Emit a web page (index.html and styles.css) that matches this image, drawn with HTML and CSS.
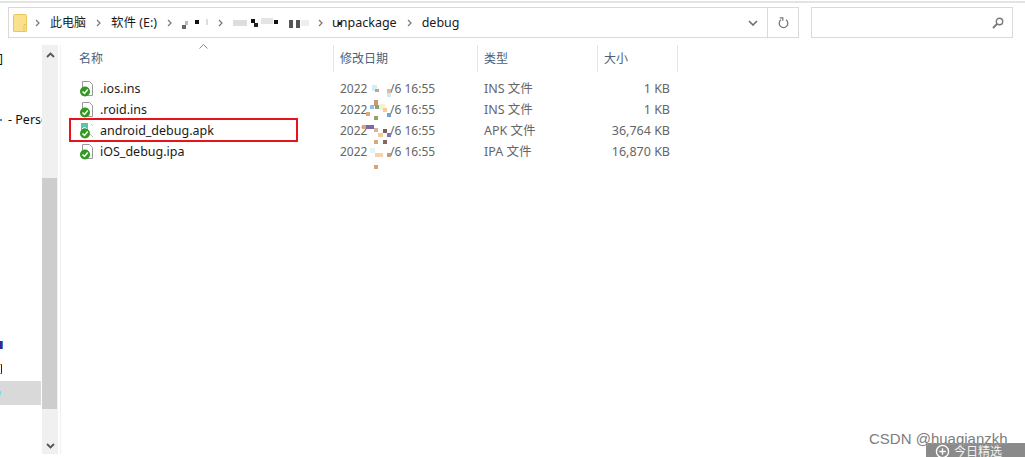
FILE: index.html
```html
<!DOCTYPE html>
<html lang="zh">
<head>
<meta charset="utf-8">
<title>debug</title>
<link rel="stylesheet" href="styles.css">
</head>
<body>
<div class="topline"></div>
<div class="toolbar">
  <div class="address">
    <svg class="folder" width="14" height="18" viewBox="0 0 14 18"><path d="M.5 1.500a1 1 0 0 1 1-1h11a1 1 0 0 1 1 1v15.500a.5.500 0 0 1-.5.500H1a.5.500 0 0 1-.5-.5z" fill="#fbe08e" stroke="#eac75c"/><path d="M11 17V10.500h2.500" fill="none" stroke="#eac75c"/></svg>
    <div class="crumbs">
      <svg class="sep" width="5" height="8" viewBox="0 0 5 8"><path d="M1 1l3 3-3 3" fill="none" stroke="#777" stroke-width="1.200"/></svg>
      <span class="crumb">此电脑</span>
      <svg class="sep" width="5" height="8" viewBox="0 0 5 8"><path d="M1 1l3 3-3 3" fill="none" stroke="#777" stroke-width="1.200"/></svg>
      <span class="crumb crumb-latin">软件 (E:)</span>
      <svg class="sep" width="5" height="8" viewBox="0 0 5 8"><path d="M1 1l3 3-3 3" fill="none" stroke="#777" stroke-width="1.200"/></svg>
      <svg class="mask-a" width="26" height="12" viewBox="0 0 26 12"><rect x="0" y="8" width="4" height="4" fill="#666"/><rect x="3" y="4" width="3" height="4" fill="#bbb"/><rect x="13" y="3" width="4" height="4" fill="#111"/><rect x="24" y="2" width="2" height="6" fill="#ddd"/></svg>
      <svg class="sep" width="5" height="8" viewBox="0 0 5 8"><path d="M1 1l3 3-3 3" fill="none" stroke="#777" stroke-width="1.200"/></svg>
      <svg class="mask-b" width="78" height="12" viewBox="0 0 78 12"><rect x="0" y="3" width="14" height="6" fill="#ddd"/><rect x="18" y="2" width="4" height="4" fill="#111"/><rect x="21" y="6" width="4" height="4" fill="#222"/><rect x="28" y="1" width="12" height="6" fill="#e4e4e4"/><rect x="41" y="3" width="4" height="4" fill="#111"/><rect x="56" y="3" width="4" height="8" fill="#555"/><rect x="63" y="3" width="4" height="8" fill="#555"/><rect x="68" y="3" width="8" height="6" fill="#eee"/></svg>
      <svg class="sep" width="5" height="8" viewBox="0 0 5 8"><path d="M1 1l3 3-3 3" fill="none" stroke="#777" stroke-width="1.200"/></svg>
      <span class="crumb crumb-latin crumb-masked">unpackage</span>
      <svg class="sep" width="5" height="8" viewBox="0 0 5 8"><path d="M1 1l3 3-3 3" fill="none" stroke="#777" stroke-width="1.200"/></svg>
      <span class="crumb crumb-latin">debug</span>
    </div>
    <svg class="chevron" width="10" height="6" viewBox="0 0 10 6"><path d="M1 1l4 4 4-4" fill="none" stroke="#6d6d6d" stroke-width="1.600"/></svg>
    <div class="refresh">
      <svg width="11" height="12" viewBox="0 0 11 12"><path d="M3 2.800a4.300 4.300 0 1 0 5 0" fill="none" stroke="#777" stroke-width="1.300"/><path d="M1.800 .8h3v3" fill="none" stroke="#777" stroke-width="1.200"/></svg>
    </div>
  </div>
  <div class="search">
    <svg width="12" height="12" viewBox="0 0 12 12"><circle cx="7.500" cy="4.500" r="3.200" fill="none" stroke="#777" stroke-width="1.400"/><path d="M5 7l-4 4" stroke="#777" stroke-width="1.800"/></svg>
  </div>
</div>
<div class="main">
  <aside class="nav">
    <div class="nav-list">
      <div class="nav-item nav-bracket">]</div>
      <div class="nav-item nav-persona"><i class="dot"></i>- Perso</div>
      <div class="nav-item nav-m"><i class="frag frag-m"></i></div>
      <div class="nav-item nav-o"><i class="frag frag-o"></i></div>
      <div class="nav-item nav-selected"><i class="frag frag-s"></i></div>
    </div>
    <div class="scrollbar">
      <svg class="arrow arrow-up" width="9" height="6" viewBox="0 0 9 6"><path d="M1 5l3.500-3.500L8 5" fill="none" stroke="#555" stroke-width="1.800"/></svg>
      <div class="thumb"></div>
      <svg class="arrow arrow-down" width="9" height="6" viewBox="0 0 9 6"><path d="M1 1l3.500 3.500L8 1" fill="none" stroke="#555" stroke-width="1.800"/></svg>
    </div>
  </aside>
  <section class="files">
    <svg class="sort" width="9" height="5" viewBox="0 0 9 5"><path d="M.5 4.500l4-4 4 4" fill="none" stroke="#8a8a8a"/></svg>
    <div class="head">
      <div class="col-name head-cell">名称</div>
      <div class="col-date head-cell">修改日期</div>
      <div class="col-type head-cell">类型</div>
      <div class="col-size head-cell">大小</div>
    </div>
    <div class="rows">
      <div class="row">
        <div class="col-name name-cell"><svg class="ficon" width="14" height="16" viewBox="0 0 14 16"><path d="M2.500.5h7l3 3v11h-10z" fill="#fff" stroke="#9a9a9a"/><circle cx="5" cy="10.500" r="5" fill="#2f9a1e"/><path d="M2.500 10.500l2 2 3.200-4" fill="none" stroke="#fff" stroke-width="1.500"/></svg><span>.ios.ins</span></div>
        <div class="col-date date-cell"><span class="yr">2022</span><span>/6 16:55</span></div>
        <div class="col-type">INS 文件</div>
        <div class="col-size">1 KB</div>
      </div>
      <div class="row">
        <div class="col-name name-cell"><svg class="ficon" width="14" height="16" viewBox="0 0 14 16"><path d="M2.500.5h7l3 3v11h-10z" fill="#fff" stroke="#9a9a9a"/><circle cx="5" cy="10.500" r="5" fill="#2f9a1e"/><path d="M2.500 10.500l2 2 3.200-4" fill="none" stroke="#fff" stroke-width="1.500"/></svg><span>.roid.ins</span></div>
        <div class="col-date date-cell"><span class="yr">2022</span><span>/6 16:55</span></div>
        <div class="col-type">INS 文件</div>
        <div class="col-size">1 KB</div>
      </div>
      <div class="row">
        <div class="col-name name-cell"><svg class="ficon" width="14" height="16" viewBox="0 0 14 16"><rect x="1" y="0" width="7" height="7" fill="#57c7a9"/><path d="M2 6a3 3 0 0 1 5 0" fill="none" stroke="#fff"/><path d="M11 1l2 2" stroke="#ccc"/><path d="M10 11l3 3" stroke="#bbb"/><circle cx="5" cy="10.500" r="5" fill="#2f9a1e"/><path d="M2.500 10.500l2 2 3.200-4" fill="none" stroke="#fff" stroke-width="1.500"/></svg><span>android_debug.apk</span></div>
        <div class="col-date date-cell"><span class="yr">2022</span><span>/6 16:55</span></div>
        <div class="col-type">APK 文件</div>
        <div class="col-size">36,764 KB</div>
      </div>
      <div class="row">
        <div class="col-name name-cell"><svg class="ficon" width="14" height="16" viewBox="0 0 14 16"><path d="M2.500.5h7l3 3v11h-10z" fill="#fff" stroke="#9a9a9a"/><circle cx="5" cy="10.500" r="5" fill="#2f9a1e"/><path d="M2.500 10.500l2 2 3.200-4" fill="none" stroke="#fff" stroke-width="1.500"/></svg><span>iOS_debug.ipa</span></div>
        <div class="col-date date-cell"><span class="yr">2022</span><span>/6 16:55</span></div>
        <div class="col-type">IPA 文件</div>
        <div class="col-size">16,870 KB</div>
      </div>
    </div>
    <svg class="mosaic" width="30" height="90" viewBox="0 0 30 90">
      <rect x="10" y="5" width="5" height="6" fill="#cdeefa"/><rect x="13" y="9" width="4" height="3" fill="#d2a277"/><rect x="25" y="9" width="4" height="4" fill="#e5bb96"/><rect x="25" y="13" width="4" height="4" fill="#c9ecf8"/>
      <rect x="12" y="20" width="4" height="6" fill="#c89a6d"/><rect x="8" y="25" width="4" height="4" fill="#8fc0e8"/><rect x="13" y="25" width="4" height="4" fill="#8aa07a"/><rect x="17" y="24" width="6" height="6" fill="#f5f2cc"/><rect x="4" y="32" width="4" height="4" fill="#dba878"/><rect x="12" y="36" width="4" height="4" fill="#9aa06c"/><rect x="21" y="28" width="4" height="4" fill="#f4cc9c"/><rect x="25" y="33" width="4" height="4" fill="#6ea5d8"/>
      <rect x="0" y="45" width="4" height="4" fill="#d5a67c"/><rect x="4" y="45" width="8" height="4" fill="#7f66a6"/><rect x="12" y="48" width="4" height="4" fill="#d5b49a"/><rect x="16" y="53" width="5" height="4" fill="#f4cc9c"/><rect x="21" y="49" width="4" height="4" fill="#7c5e5a"/><rect x="25" y="53" width="4" height="4" fill="#8276b6"/><rect x="12" y="60" width="4" height="4" fill="#d8a77c"/><rect x="21" y="60" width="4" height="4" fill="#8a6660"/>
      <rect x="8" y="68" width="5" height="5" fill="#e3f3f6"/><rect x="13" y="73" width="8" height="4" fill="#f5d2ae"/><rect x="25" y="73" width="4" height="4" fill="#c99b76"/><rect x="12" y="85" width="4" height="4" fill="#d5a57a"/>
    </svg>
    <div class="highlight"></div>
  </section>
</div>
<div class="promo">
  <svg width="15" height="15" viewBox="0 0 16 16"><circle cx="8" cy="8" r="6.500" fill="none" stroke="#fff" stroke-width="1.500"/><path d="M8 4.500v7M4.500 8h7" stroke="#fff" stroke-width="1.500"/></svg>
  <span>今日精选</span>
</div>
<div class="watermark">CSDN @huaqianzkh</div>
</body>
</html>
```

FILE: styles.css
```css
* { box-sizing: border-box; }
html, body { margin: 0; height: 100%; }
body {
  width: 1025px;
  height: 457px;
  overflow: hidden;
  position: relative;
  background: #fff;
  color: #1a1a1a;
  font-family: "Noto Sans", "Noto Sans CJK SC", sans-serif;
  font-size: 12px;
  display: flex;
  flex-direction: column;
}
.topline { height: 2px; margin-top: 1px; background: #e3e3e3; flex: none; }
.toolbar { display: flex; gap: 12px; padding: 4px 0 0 8px; height: 34px; flex: none; }
.address {
  flex: none;
  width: 791px; height: 31px;
  border: 1px solid #d9d9d9;
  display: flex; align-items: center;
  padding-left: 4px;
}
.folder { flex: none; }
.crumbs { display: flex; align-items: center; flex: 1; height: 100%; line-height: 16px; }
.crumb { white-space: nowrap; }
.crumb-latin { font-size: 12.5px; }
.crumb-masked { position: relative; margin-left: -1px; }
.crumb-masked::after {
  content: "";
  position: absolute; left: 6px; top: 7px;
  width: 3px; height: 3px;
  background: #222;
}
.sep { flex: none; margin: 0 10px; }
.sep:first-child { margin-left: 8px; }
.mask-a { flex: none; }
.mask-b { margin-right: -3px; flex: none; }
.chevron { margin-right: 9px; flex: none; }
.refresh {
  width: 31px; height: 100%;
  border-left: 1px solid #d9d9d9;
  display: flex; align-items: center; justify-content: center;
}
.search {
  flex: none;
  width: 202px; height: 31px;
  border: 1px solid #d9d9d9;
  display: flex; align-items: center; justify-content: flex-end;
  padding-right: 8px;
}
.main { display: flex; flex: 1; min-height: 0; padding-top: 8px; }
.nav { display: flex; flex: none; width: 61px; border-right: 1px solid #f0f0f0; height: 409px; }
.nav-list {
  width: 42px; flex: none; overflow: hidden;
  display: flex; flex-direction: column;
  color: #111;
}
.nav-item { height: 24px; line-height: 24px; white-space: nowrap; flex: none; }
.nav-bracket { margin-left: -1px; margin-top: 2px; }
.nav-persona { margin-top: 37px; display: flex; align-items: center; gap: 5px; font-size: 12.5px; }
.nav-persona .dot { margin-right: 1px; }
.dot { width: 2px; height: 2px; background: #2f8fe0; flex: none; }
.nav-m { margin-top: 201px; display: flex; align-items: center; }
.nav-o { display: flex; align-items: center; }
.nav-selected { background: #d9d9d9; margin-right: 1px; display: flex; align-items: center; }
.frag { display: block; flex: none; }
.frag-m { width: 3px; height: 8px; background: #3f1f9e; border-right: 1px solid #2f7fd0; }
.frag-o { width: 2px; height: 10px; border-right: 1px solid #222; border-top: 1px solid #e09020; border-bottom: 1px solid #e09020; }
.frag-s { width: 1px; height: 4px; background: #7fd8e0; }
.scrollbar {
  width: 16px; flex: none; background: #f0f0f0;
  display: flex; flex-direction: column; align-items: center;
  margin-right: 3px;
}
.arrow { flex: none; }
.arrow-up { margin: 7px 0 0; }
.arrow-down { margin: 34px 0 5px; }
.thumb { width: 15px; align-self: flex-start; height: 231px; margin-top: 120px; background: #cdcdcd; }
.files { position: relative; flex: 1; }
.sort { position: absolute; left: 138px; top: -1px; }
.head { display: flex; height: 27px; color: #4c607a; font-size: 12px; }
.head-cell { height: 27px; border-right: 1px solid #e5e5e5; line-height: 27px; padding-left: 6px; }
.col-name { width: 273px; flex: none; }
.head .col-name { padding-left: 18px; }
.col-date { width: 144px; flex: none; }
.col-type { width: 120px; flex: none; }
.col-size { width: 80px; flex: none; }
.rows { padding-top: 6px; color: #666; font-size: 12.5px; }
.row { display: flex; height: 21px; line-height: 21px; align-items: center; white-space: nowrap; }
.row .col-date, .row .col-type { padding-left: 6px; }
.row .col-size { width: 72px; text-align: right; }
.name-cell { display: flex; align-items: center; color: #1a1a1a; padding-left: 19px; gap: 6px; }
.ficon { flex: none; }
.date-cell { display: flex; align-items: center; font-size: 12px; }
.yr { width: 50px; flex: none; }
.mosaic { position: absolute; left: 301px; top: 35px; }
.highlight {
  position: absolute; left: 8px; top: 73px;
  width: 229px; height: 24px;
  border: 2px solid #e8141c;
}
.promo {
  position: absolute; right: 0; bottom: 0;
  width: 99px; height: 14px;
  background: #8a8a8a;
  color: #f4f4f4;
  font-size: 12px;
  display: flex; align-items: flex-start; gap: 4px;
  padding: 1px 0 0 9px;
  overflow: hidden;
}
.promo span { line-height: 16px; }
.promo svg { flex: none; }
.watermark {
  position: absolute; left: 869px; top: 430px;
  font-family: "Liberation Sans", sans-serif;
  font-size: 15px;
  color: #7d7d7d;
  text-shadow: 0 0 1px #fff;
  white-space: nowrap;
}
```
